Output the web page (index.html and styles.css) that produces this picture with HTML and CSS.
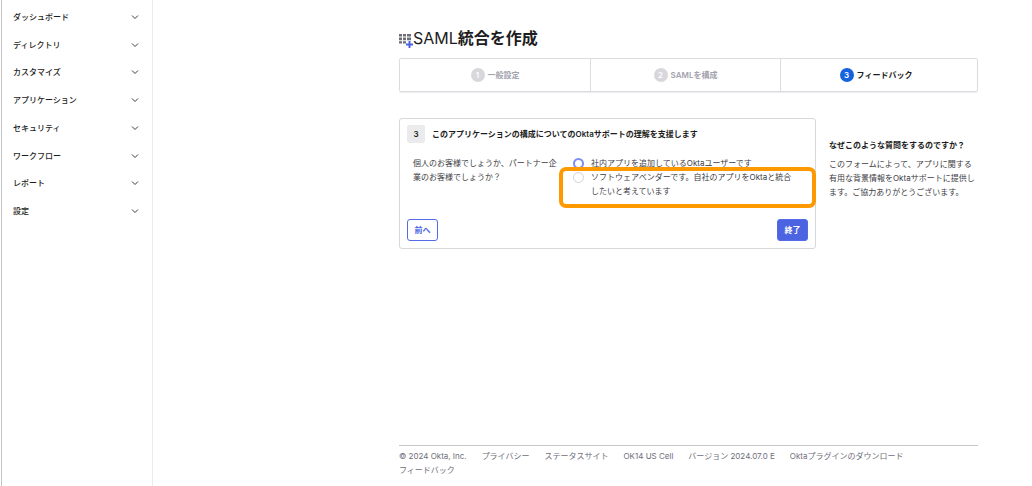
FILE: index.html
```html
<!DOCTYPE html>
<html lang="ja">
<head>
<meta charset="utf-8">
<meta name="viewport" content="width=device-width, initial-scale=1">
<title>SAML統合を作成</title>
<link rel="stylesheet" href="styles.css">
</head>
<body>
<div class="app">
  <nav class="nav" aria-label="メイン">
    <ul class="nav-list">
      <li><button class="nav-item" type="button">ダッシュボード<svg class="chevron" viewBox="0 0 8 8" aria-hidden="true"><path d="M1 2.500 4 5.500l3-3"/></svg></button></li>
      <li><button class="nav-item" type="button">ディレクトリ<svg class="chevron" viewBox="0 0 8 8" aria-hidden="true"><path d="M1 2.500 4 5.500l3-3"/></svg></button></li>
      <li><button class="nav-item" type="button">カスタマイズ<svg class="chevron" viewBox="0 0 8 8" aria-hidden="true"><path d="M1 2.500 4 5.500l3-3"/></svg></button></li>
      <li><button class="nav-item" type="button">アプリケーション<svg class="chevron" viewBox="0 0 8 8" aria-hidden="true"><path d="M1 2.500 4 5.500l3-3"/></svg></button></li>
      <li><button class="nav-item" type="button">セキュリティ<svg class="chevron" viewBox="0 0 8 8" aria-hidden="true"><path d="M1 2.500 4 5.500l3-3"/></svg></button></li>
      <li><button class="nav-item" type="button">ワークフロー<svg class="chevron" viewBox="0 0 8 8" aria-hidden="true"><path d="M1 2.500 4 5.500l3-3"/></svg></button></li>
      <li><button class="nav-item" type="button">レポート<svg class="chevron" viewBox="0 0 8 8" aria-hidden="true"><path d="M1 2.500 4 5.500l3-3"/></svg></button></li>
      <li><button class="nav-item" type="button">設定<svg class="chevron" viewBox="0 0 8 8" aria-hidden="true"><path d="M1 2.500 4 5.500l3-3"/></svg></button></li>
    </ul>
  </nav>

  <div class="page">
    <main>
      <h1 class="title">
        <svg class="title-icon" viewBox="0 0 14 14" aria-hidden="true">
          <path class="grid-cells" d="M0 0h3v2.600H0zM4 0h3v2.600H4zM8 0h4v2.600H8zM0 3.600h3v2.600H0zM4 3.600h3v2.600H4zM8 3.600h4v2.600H8zM0 7.200h3v2.300H0zM4 7.200h3v2.300H4z"/>
          <path class="plus" d="M10.500 7v7M7 10.500h7"/>
        </svg>
        <span><span class="latin">SAML</span>統合を作成</span>
      </h1>

      <ol class="steps">
        <li class="step"><span class="step-num">1</span>一般設定</li>
        <li class="step"><span class="step-num">2</span>SAMLを構成</li>
        <li class="step current" aria-current="step"><span class="step-num">3</span>フィードバック</li>
      </ol>

      <div class="columns">
        <form class="panel">
          <h2 class="panel-title"><span class="panel-num">3</span>このアプリケーションの構成についてのOktaサポートの理解を支援します</h2>
          <div class="field" role="radiogroup" aria-labelledby="question">
            <p class="question" id="question">個人のお客様でしょうか、パートナー企業のお客様でしょうか？</p>
            <div class="options">
              <label class="option"><input class="radio" type="radio" name="kind" checked>社内アプリを追加しているOktaユーザーです</label>
              <label class="option marked"><input class="radio" type="radio" name="kind"><span>ソフトウェアベンダーです。自社のアプリをOktaと統合したいと考えています</span></label>
            </div>
          </div>
          <div class="actions">
            <button class="btn" type="button">前へ</button>
            <button class="btn primary" type="submit">終了</button>
          </div>
        </form>
        <aside class="help">
          <h3 class="help-title">なぜこのような質問をするのですか？</h3>
          <p class="help-text">このフォームによって、アプリに関する有用な背景情報をOktaサポートに提供します。ご協力ありがとうございます。</p>
        </aside>
      </div>
    </main>

    <footer class="footer">
      <span>© 2024 Okta, Inc.</span>
      <a href="#">プライバシー</a>
      <a href="#">ステータスサイト</a>
      <a href="#">OK14 US Cell</a>
      <span>バージョン 2024.07.0 E</span>
      <a href="#">Oktaプラグインのダウンロード</a>
      <a href="#">フィードバック</a>
    </footer>
  </div>
</div>
</body>
</html>
```
FILE: styles.css
```css
* { box-sizing: border-box; }

body {
  margin: 0;
  background: #fff;
  color: #1d1d21;
  font: 8px/14px Inter, "Noto Sans CJK JP", sans-serif;
}

h1, h2, h3, p, ul, ol { margin: 0; padding: 0; }
ul, ol { list-style: none; }
button { font: inherit; color: inherit; cursor: pointer; }

.app {
  display: flex;
  min-height: 100vh;
  margin-left: 1px;
  border-left: 1px solid #c4c4c8;
}

.nav {
  flex: 0 0 151px;
  border-right: 1px solid #ebebed;
  padding-top: 3px;
}
.nav-list {
  display: grid;
  grid-auto-rows: 1fr;
  height: 222px;
}
.nav-list li { display: grid; }
.nav-item {
  display: flex;
  align-items: center;
  justify-content: space-between;
  padding: 0 13px 0 11px;
  border: 0;
  background: none;
  font-weight: 500;
}
.chevron {
  width: 8px;
  height: 8px;
  fill: none;
  stroke: #3c3c44;
}

.page {
  flex: 1;
  display: flex;
  flex-direction: column;
  padding: 26px 54px 9px 246px;
}

.title {
  display: flex;
  align-items: center;
  font-size: 16px;
  line-height: 24px;
  font-weight: 700;
}
.title .latin { font-weight: 400; }
.title-icon { width: 14px; height: 14px; margin-top: 5px; }
.grid-cells { fill: #6e6e78; }
.plus { stroke: #4c64e1; stroke-width: 2; }

.steps {
  display: grid;
  grid-template-columns: 191fr 191fr 198fr;
  margin-top: 8px;
  border: 1px solid #dcdce0;
  border-radius: 2px;
  box-shadow: 0 1px 1px #ededf0;
}
.step {
  display: flex;
  align-items: center;
  justify-content: center;
  gap: 3px;
  height: 32px;
  padding-bottom: 1px;
  color: #a3a3ad;
  font-weight: 600;
}
.step + .step { border-left: 1px solid #dcdce0; }
.step-num {
  width: 14px;
  height: 14px;
  border-radius: 50%;
  background: #d7d7dc;
  color: #fff;
  text-align: center;
}
.step.current { padding-right: 6px; color: #1d1d21; }
.step.current .step-num { background: #1662dd; }

.columns {
  display: grid;
  grid-template-columns: 1fr 149px;
  gap: 13px;
  margin-top: 26px;
}
.panel {
  border: 1px solid #d7d7dc;
  border-radius: 3px;
  padding: 6px 7px 7px;
}
.panel-title {
  display: flex;
  align-items: center;
  gap: 7px;
  font-size: 8px;
  font-weight: 600;
}
.panel-num {
  width: 18px;
  line-height: 18px;
  border-radius: 2px;
  background: #ebebed;
  text-align: center;
}
.field {
  display: grid;
  grid-template-columns: 148px 1fr;
  gap: 12px;
  margin-top: 13px;
  padding: 0 12px 0 6px;
  color: #3c3c44;
}
.option {
  display: flex;
  gap: 7px;
}
.radio {
  appearance: none;
  flex: none;
  width: 11px;
  height: 11px;
  margin: 2px 0 0;
  border: 1px solid #d2d2d7;
  border-radius: 50%;
  background: #fff;
}
.radio:checked { border: 2px solid #7a8df0; }
.marked { position: relative; }
.marked::after {
  content: "";
  position: absolute;
  inset: -3px -20px -10px -14px;
  border: 4px solid #ff9900;
  border-radius: 7px;
}

.actions {
  display: flex;
  justify-content: space-between;
  margin-top: 21px;
}
.btn {
  width: 31px;
  height: 22px;
  padding: 0;
  border: 1px solid #546be7;
  border-radius: 3px;
  background: #fff;
  color: #4c64e1;
  font-weight: 600;
}
.btn.primary {
  background: #4c64e1;
  color: #fff;
}

.help { padding-top: 20px; }
.help-title { font-size: 8px; font-weight: 600; }
.help-text { margin-top: 5px; color: #3c3c44; }

.footer {
  display: flex;
  flex-wrap: wrap;
  column-gap: 15px;
  margin-top: auto;
  padding: 3px 50px 0 0;
  border-top: 1px solid #c4c8c8;
  color: #6e6e78;
}
.footer a { color: inherit; text-decoration: none; }
```
